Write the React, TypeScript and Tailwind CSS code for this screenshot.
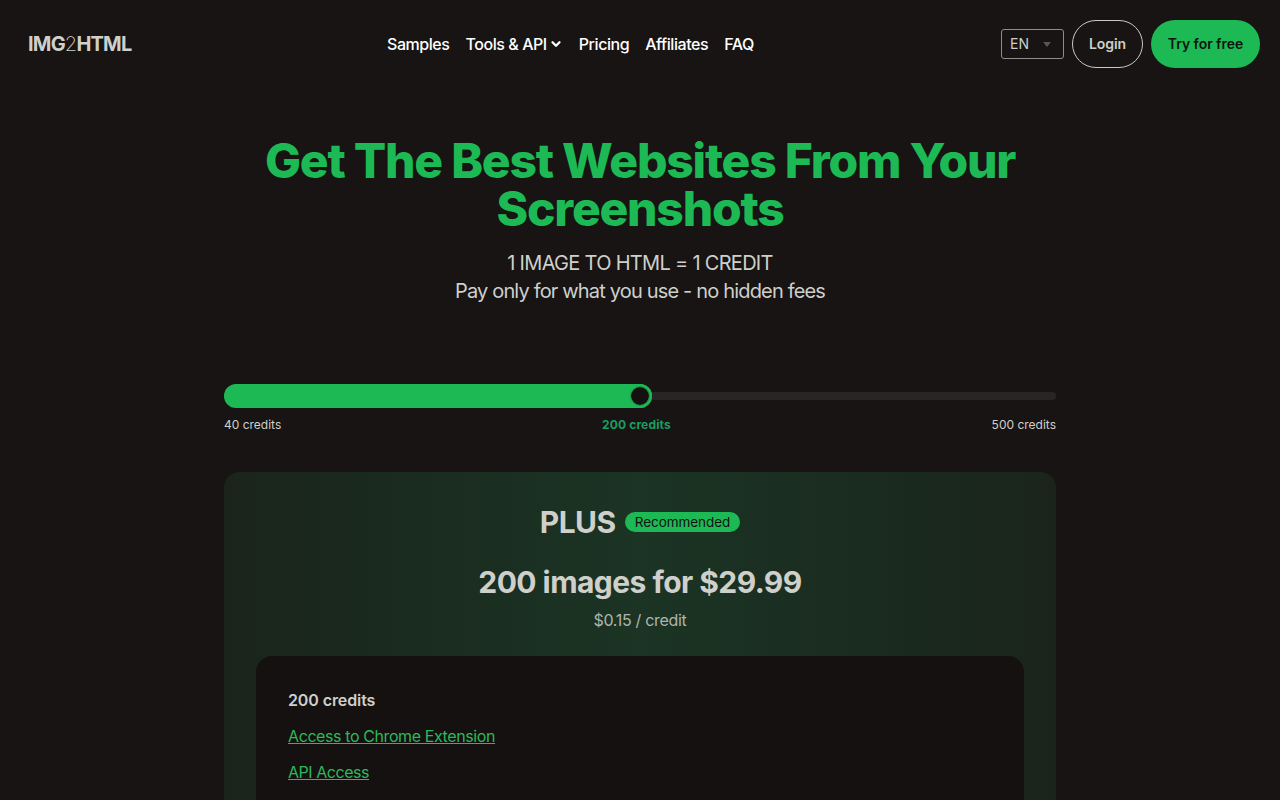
import { ChevronDown } from 'lucide-react';

const NAV_LINKS = ['Samples', 'Tools & API', 'Pricing', 'Affiliates', 'FAQ'];

function Header() {
  return (
    <header className="flex h-[88px] items-center justify-between pl-7 pr-5">
      <div className="w-[300px] text-[20px] font-bold tracking-[-0.8px] text-[#cfcfcb]">
        IMG<span className="font-extralight">2</span>HTML
      </div>
      <nav className="absolute left-[387px] flex items-center gap-4 text-base font-medium tracking-[-0.44px] text-white">
        {NAV_LINKS.map((link) => (
          <a key={link} className="flex items-center gap-0.5">
            {link}
            {link === 'Tools & API' && <ChevronDown size={14} strokeWidth={4} />}
          </a>
        ))}
      </nav>
      <div className="flex items-center gap-2">
        <div className="flex h-[30px] w-[63px] items-center justify-between rounded-[3px] border border-[#8f8d8b] pl-2 pr-[12px] text-sm text-[#cfcfcb]">
          EN
          <span className="h-0 w-0 border-x-[4px] border-t-[5px] border-x-transparent border-t-[#55555a]" />
        </div>
        <button className="h-12 w-[71px] rounded-full border border-[#c9c9c5] text-sm font-semibold tracking-[-0.1px] text-[#cfcfcb]">Login</button>
        <button className="h-12 w-[109px] rounded-full bg-[#1db954] text-sm font-semibold tracking-[-0.05px] text-[#0d1410]">Try for free</button>
      </div>
    </header>
  );
}

function CreditSlider() {
  return (
    <div>
      <div className="relative flex h-6 items-center">
        <div className="h-2 w-full rounded-full bg-[#282625]" />
        <div className="absolute left-0 top-0 h-6 w-[428px] rounded-full bg-[#1db954]" />
        <div className="absolute left-[404px] top-0 h-6 w-6 rounded-full border-[3px] border-[#1db954] bg-[#141110] outline outline-[#15803d]/60 outline-offset-[-3px]" />
      </div>
      <div className="mt-[9px] flex justify-between text-xs leading-4 text-[#cfcfcb]">
        <span>40 credits</span>
        <span className="font-bold tracking-[0.15px] text-[#1a9e62]">200 credits</span>
        <span>500 credits</span>
      </div>
    </div>
  );
}

function PlanCard() {
  return (
    <div className="mt-[39px] rounded-t-2xl bg-[linear-gradient(to_right,#1a241b_0%,#1b3424_50%,#1a241b_100%)] px-8 pt-8">
      <div className="flex items-center justify-center gap-[9px] leading-9">
        <span className="text-[30px] font-bold leading-9 tracking-[-0.5px] text-[#cfcfcb]">PLUS</span>
        <span className="rounded-full bg-[#1db954] px-2.5 text-[13.5px] leading-5 tracking-[-0.05px] text-[#0d1410]">Recommended</span>
      </div>
      <div className="mt-6 text-center text-[30px] font-bold leading-9 tracking-[-0.55px] text-[#cfcfcb]">200 images for $29.99</div>
      <div className="mt-[8px] text-center text-base leading-6 tracking-[-0.3px] text-[#b0b4ae]">$0.15 / credit</div>
      <div className="mt-6 h-[300px] rounded-t-2xl bg-[#141110] p-8 text-base leading-6">
        <div className="font-semibold tracking-[-0.1px] text-[#cfcfcb]">200 credits</div>
        <div className="mt-3 tracking-[-0.4px] text-[#2eb85c] underline">Access to Chrome Extension</div>
        <div className="mt-3 tracking-[-0.45px] text-[#2eb85c] underline">API Access</div>
      </div>
    </div>
  );
}

export default function App() {
  return (
    <div className="relative h-screen overflow-hidden bg-[#171413] font-['Inter',sans-serif]">
      <Header />
      <section className="mt-[49px] text-center">
        <h1 className="mx-auto w-[800px] text-[48px] font-extrabold leading-[48px] tracking-[-1.23px] text-[#1db954]">
          Get The Best Websites From Your Screenshots
        </h1>
        <p className="mt-4 text-xl leading-7 tracking-[-0.7px] text-[#cfcfcb]">1 IMAGE TO HTML = 1 CREDIT</p>
        <p className="text-xl leading-7 tracking-[-0.83px] text-[#cfcfcb]">Pay only for what you use - no hidden fees</p>
      </section>
      <main className="mx-auto mt-[79px] w-[832px]">
        <CreditSlider />
        <PlanCard />
      </main>
    </div>
  );
}
